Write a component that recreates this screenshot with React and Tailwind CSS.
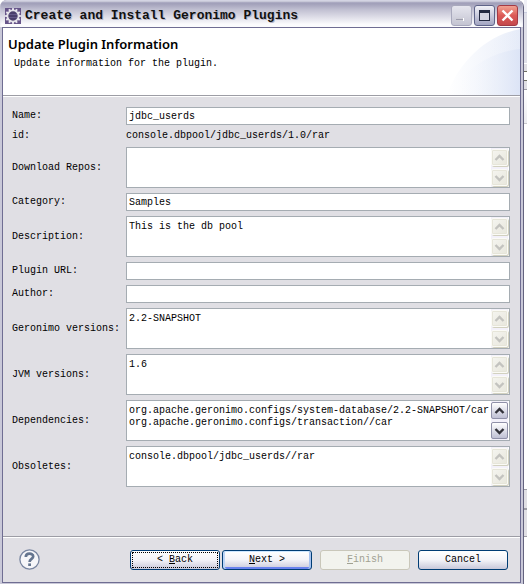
import React from "react";

const mono = "font-['Liberation_Mono',monospace]";

function Chevron({ up, color }) {
  return (
    <svg width="11" height="8" viewBox="0 0 11 8" aria-hidden="true">
      <path d={up ? "M1.5 6 L5.5 2 L9.5 6" : "M1.5 2 L5.5 6 L9.5 2"} fill="none" stroke={color} strokeWidth="2.4" />
    </svg>
  );
}

function ScrollBar({ active }) {
  const tone = active
    ? "border-[#8f90a8] bg-linear-to-b from-white to-[#bfc0d4]"
    : "border-[#fbfbf6] bg-linear-to-br from-[#f5f5f0] to-[#e8e7dd] shadow-[inset_0_0_0_1px_#e6e5d9,1px_1px_0_#d2d1c0]";
  const color = active ? "#33333b" : "#c3c3bf";
  const button = `flex h-[17px] items-center justify-center rounded-[2px] border ${tone}`;
  return (
    <div className="flex w-[17px] shrink-0 flex-col justify-between bg-[#f3f1fa] py-px">
      <button type="button" aria-label="Scroll up" disabled={!active} className={button}>
        <Chevron up color={color} />
      </button>
      <button type="button" aria-label="Scroll down" disabled={!active} className={button}>
        <Chevron color={color} />
      </button>
    </div>
  );
}

const fields = [
  { id: "name", label: "Name:", type: "text", value: "jdbc_userds" },
  { id: "plugin-id", label: "id:", type: "static", value: "console.dbpool/jdbc_userds/1.0/rar" },
  { id: "repos", label: "Download Repos:", type: "area", value: "" },
  { id: "category", label: "Category:", type: "text", value: "Samples" },
  { id: "description", label: "Description:", type: "area", value: "This is the db pool" },
  { id: "url", label: "Plugin URL:", type: "text", value: "" },
  { id: "author", label: "Author:", type: "text", value: "" },
  { id: "geronimo", label: "Geronimo versions:", type: "area", value: "2.2-SNAPSHOT" },
  { id: "jvm", label: "JVM versions:", type: "area", value: "1.6" },
  {
    id: "deps",
    label: "Dependencies:",
    type: "area",
    value: "org.apache.geronimo.configs/system-database/2.2-SNAPSHOT/car\norg.apache.geronimo.configs/transaction//car",
    active: true,
  },
  { id: "obsoletes", label: "Obsoletes:", type: "area", value: "console.dbpool/jdbc_userds//rar" },
];

function Field({ field }) {
  const { id, label, type, value, active } = field;
  return (
    <>
      <label htmlFor={id} className="whitespace-nowrap">{label}</label>
      {type === "static" && <output id={id} className="block">{value}</output>}
      {type === "text" && (
        <input id={id} type="text" defaultValue={value} className="block h-[18px] w-full border border-[#a5acb2] bg-white px-0.5 outline-none" />
      )}
      {type === "area" && (
        <div className="flex h-[41px] border border-[#a5acb2] bg-white pr-px">
          <textarea id={id} defaultValue={value} wrap="off" className="block min-w-0 flex-1 resize-none overflow-hidden pt-1 pl-0.5 outline-none" />
          <ScrollBar active={active} />
        </div>
      )}
    </>
  );
}

function Gear() {
  const teeth = Array.from({ length: 12 }, (_, i) => i * 30);
  return (
    <svg width="16" height="16" viewBox="0 0 16 16" aria-hidden="true">
      <rect width="16" height="16" fill="#665489" />
      {teeth.map((a) => (
        <rect key={a} x="7" y="0.2" width="2" height="3" fill="#eceaf1" transform={`rotate(${a} 8 8)`} />
      ))}
      <circle cx="8" cy="8" r="5.6" fill="#4a3f6c" stroke="#e4e2e8" strokeWidth="1.8" />
      <path d="M4 6.5h8M4 9.5h8" stroke="#6c6190" strokeWidth="0.8" />
    </svg>
  );
}

function TitleBar() {
  const base = "flex size-[21px] items-center justify-center rounded-[3px] border";
  return (
    <header className="flex h-[27px] shrink-0 items-center bg-linear-to-b from-[#8e8caa] via-[#c0bfd1] via-35% to-[#fbfbfd] to-90% pt-1 pr-[5px] pl-[5px] shadow-[inset_0_2px_2px_#d9d9e6]">
      <Gear />
      <h1 className={`${mono} ml-1 flex-1 text-[13px] leading-4 font-bold whitespace-nowrap text-[#111] [text-shadow:1px_1px_0_#b5b4c6]`}>Create and Install Geronimo Plugins</h1>
      <div className="flex gap-[2px]">
        <button type="button" aria-label="Minimize" className={`${base} border-[#a9a9bd] bg-linear-to-b from-[#e6e6ee] to-[#c4c4d2]`}>
          <svg width="19" height="19" aria-hidden="true"><path d="M4 13.5h8" stroke="#fff" strokeWidth="3" /><path d="M4 13.5h7" stroke="#9c9cac" strokeWidth="2" /></svg>
        </button>
        <button type="button" aria-label="Maximize" className={`${base} border-[#5f6489] bg-linear-to-b from-[#f2f2f8] to-[#a3a5c2]`}>
          <svg width="19" height="19" aria-hidden="true"><rect x="4.5" y="4.5" width="10" height="10" fill="#d4d4e2" stroke="#232941" /><path d="M4 5.5h11" stroke="#232941" strokeWidth="3" /></svg>
        </button>
        <button type="button" aria-label="Close" className={`${base} border-[#a33a45] bg-linear-to-b from-[#efa091] via-[#dc5a57] to-[#c4484c]`}>
          <svg width="19" height="19" aria-hidden="true"><path d="M4.5 4.5l10 10M14.5 4.5l-10 10" stroke="#fff" strokeWidth="2.4" /></svg>
        </button>
      </div>
    </header>
  );
}

function Swoosh() {
  return (
    <svg width="73" height="67" viewBox="0 0 73 67" aria-hidden="true">
      <defs>
        <linearGradient id="sweep-light"><stop offset="0" stopColor="#fff" /><stop offset="1" stopColor="#e9eef9" /></linearGradient>
        <linearGradient id="sweep-dark"><stop offset="0" stopColor="#fff" stopOpacity="0" /><stop offset="1" stopColor="#dce4f6" /></linearGradient>
      </defs>
      <path d="M0 67C10 38 36 8 73 1V67Z" fill="url(#sweep-light)" />
      <path d="M24 45C32 22 52 6 73 1V45Z" fill="url(#sweep-dark)" opacity="0.3" />
      <path d="M4 67C14 44 42 24 73 21V67Z" fill="url(#sweep-dark)" />
    </svg>
  );
}

const shell = "h-5 w-[90px] rounded-[3px] border border-[#003c74] bg-linear-to-b from-white via-[#f3f3f8] to-[#c8c8da]";

function Footer() {
  return (
    <footer className="flex items-center border-t border-[#9d9da5] py-3 pr-3 pl-4 shadow-[inset_0_1px_0_#fff]">
      <button type="button" aria-label="Help">
        <svg width="21" height="21" viewBox="0 0 21 21" aria-hidden="true">
          <circle cx="10.5" cy="10.5" r="9.6" fill="#f6f6f9" stroke="#7885a0" strokeWidth="1.3" />
          <path d="M6.8 8C6.8 3.6 14.2 3.8 14.2 7.4C14.2 10 10.6 9.8 10.6 13" fill="none" stroke="#65758f" strokeWidth="2.7" />
          <rect x="9.2" y="14.4" width="2.8" height="2.6" fill="#65758f" />
        </svg>
      </button>
      <div className="ml-auto flex gap-2">
        <div className="flex gap-0.5">
          <button type="button" className={`${shell} p-px`}>
            <span className="flex h-full items-center justify-center border border-dotted border-black whitespace-pre">&lt; <u>B</u>ack</span>
          </button>
          <button type="button" className={`${shell} shadow-[inset_0_1px_0_#cee7ff,inset_2px_0_0_#bcd4f6,inset_-2px_0_0_#a6c2f0,inset_0_-2px_0_#6982ee]`}><u>N</u>ext &gt;</button>
        </div>
        <button type="button" disabled className="h-5 w-[90px] rounded-[3px] border border-[#c9c7ba] bg-[#f2f3ee] text-[#a1a192]"><u>F</u>inish</button>
        <button type="button" className={shell}>Cancel</button>
      </div>
    </footer>
  );
}

function BackgroundWindow() {
  return (
    <aside className="flex w-[3px] shrink-0 flex-col bg-white" aria-hidden="true">
      <div className="h-3 bg-[#f0f0f6]" />
      <div className="h-[51px] border-t border-[#c9cde0] bg-[#dfdfe8]" />
      <div className="h-2 border-t border-white bg-[#e0dfe4]" />
      <div className="h-[10px] border-y border-[#6e6e62] bg-white" />
      <div className="h-[9px] border-b border-[#9d9da5] bg-[#e0dfe4]" />
      <div className="h-[34px] border-b border-[#c8c8cc] bg-linear-to-b from-white to-[#ececf0]" />
      <div className="flex-1" />
      <div className="h-5 border-y border-[#9d9da5] bg-[#e0dfe4]" />
      <div className="h-7 border-y border-[#9d9da5] bg-[#e0dfe4]" />
      <div className="h-12" />
    </aside>
  );
}

export default function App() {
  return (
    <div className={`${mono} flex min-h-screen bg-white text-[10px] leading-3 text-black`}>
      <main className="mb-px flex min-w-0 flex-1 flex-col overflow-hidden rounded-t-[7px] border-r border-[#64637f] bg-[#c9c8d8]">
        <TitleBar />
        <div className="mr-[2px] mb-px ml-[2px] flex flex-1 flex-col border border-[#6f6d92] bg-[#e0dfe4]">
          <section className="flex justify-between border-b border-[#9d9da5] bg-white">
            <div className="pt-2 pl-[5px]">
              <h2 className="font-['Noto_Sans',sans-serif] text-[13px] leading-4 font-semibold">Update Plugin Information</h2>
              <p className="mt-1.5 pl-1.5">Update information for the plugin.</p>
            </div>
            <Swoosh />
          </section>
          <form className="grid flex-1 grid-cols-[109px_minmax(0,1fr)] content-start items-center gap-[5px] border-t border-white pt-2.5 pr-2.5 pl-[9px]">
            {fields.map((field) => (
              <Field key={field.id} field={field} />
            ))}
          </form>
          <Footer />
        </div>
      </main>
      <BackgroundWindow />
    </div>
  );
}
